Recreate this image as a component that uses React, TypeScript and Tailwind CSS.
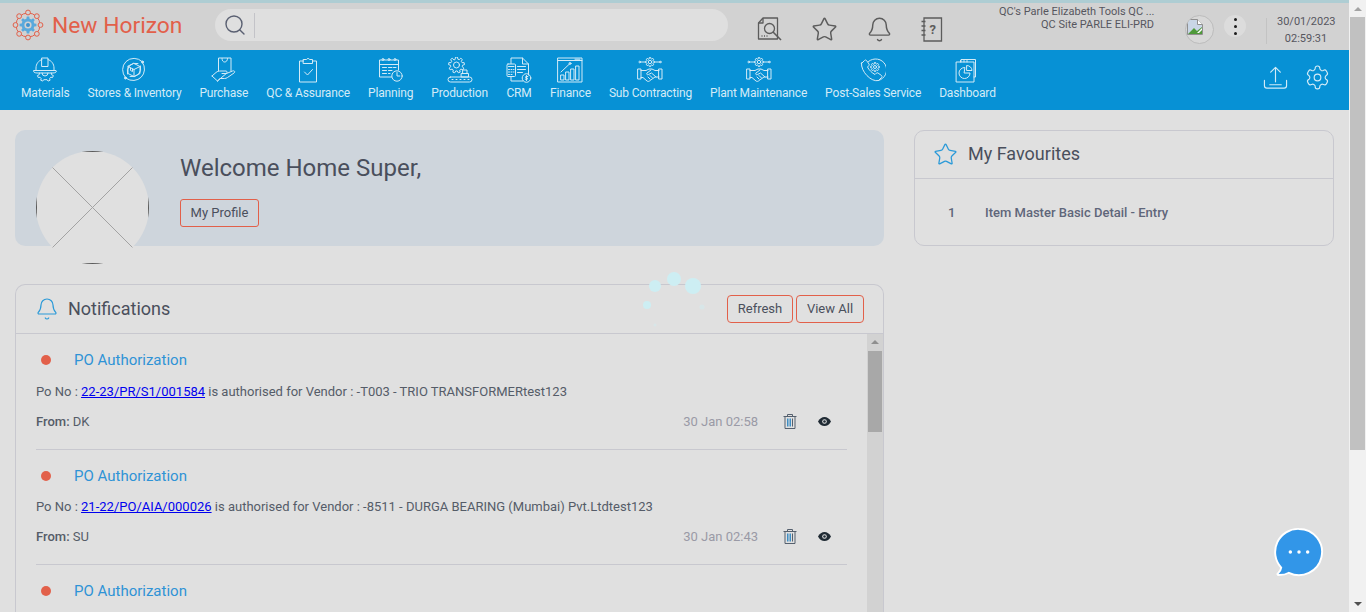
import { Bell, Search, Star } from 'lucide-react';

type IconProps = { className?: string };

const line = {
  fill: 'none',
  stroke: 'currentColor',
  strokeWidth: 1,
  strokeLinecap: 'round' as const,
  strokeLinejoin: 'round' as const,
};

// toothed outline, used by every small gear in the logo and nav icons
function gearPath(cx: number, cy: number, outer: number, inner: number, teeth: number) {
  const step = (Math.PI * 2) / teeth;
  const pts: string[] = [];
  for (let i = 0; i < teeth; i++) {
    const a = i * step - Math.PI / 2;
    const corners: [number, number][] = [
      [inner, a - step * 0.32],
      [outer, a - step * 0.18],
      [outer, a + step * 0.18],
      [inner, a + step * 0.32],
    ];
    corners.forEach(([r, t]) => {
      pts.push(`${(cx + r * Math.cos(t)).toFixed(2)} ${(cy + r * Math.sin(t)).toFixed(2)}`);
    });
  }
  return `M${pts.join('L')}Z`;
}

function MaterialsIcon() {
  return (
    <svg width="26" height="26" viewBox="0 0 26 26" {...line}>
      <path d="M2 13.500h22c.5 0 .6 1 .2 1.400-.8.8-2 1.100-3.200 1.100H5c-1.200 0-2.400-.3-3.200-1.100-.4-.4-.3-1.400.2-1.400z" />
      <path d="M4 13.500v-2.500c0-4 2.500-7.500 6-8.500M22 13.500v-2.500c0-4-2.500-7.500-6-8.500" />
      <path d="M10 1h6v8.500h-6z" />
      <path d="M7.500 16l-.4 1.800-1.700.8.9 2 1.700-.4 1.200 1.400-.5 1.600 2 .9 1-1.400h3.400l1 1.400 2-.9-.5-1.600 1.200-1.400 1.700.4.9-2-1.700-.8-.4-1.800" />
      <path d="M10 16a3 3 0 0 0 6 0" />
    </svg>
  );
}

function StoresIcon() {
  return (
    <svg width="26" height="26" viewBox="0 0 26 26" {...line}>
      <path d="M4.500 20.500A11.500 11.500 0 0 1 21 4.500M21.500 5.500A11.500 11.500 0 0 1 5.500 21.500" />
      <path d="M6.500 17A8.500 8.500 0 0 1 17 6.500M19.500 9A8.500 8.500 0 0 1 9 19.500" />
      <path d="M13 6.500l6 3v7l-6 3-6-3v-7z" />
      <path d="M7 9.500l6 3 6-3M13 12.500v7M9.500 11l0 2.500 2 1v-2.500" />
      <circle cx="21.500" cy="5" r="1" fill="currentColor" />
      <circle cx="4.500" cy="21" r="1" fill="currentColor" />
    </svg>
  );
}

function PurchaseIcon() {
  return (
    <svg width="26" height="26" viewBox="0 0 26 26" {...line}>
      <path d="M7.500 14V1h12.500v13" />
      <path d="M11 1.500c0 2 1 3.500 2.700 3.500s2.800-1.500 2.800-3.500" />
      <path d="M1 19l4-3.500c1.500-1.300 3-1.500 5-1.500h5c1.500 0 1.500 2.500 0 2.500h-4" />
      <path d="M15.500 16.500l6-2.500c2-.8 3 1 1.500 2l-6.500 4.500c-1 .7-2 1-3 1H9l-2.500 2.500z" />
      <path d="M1 19l5.500 5" />
    </svg>
  );
}

function QcIcon() {
  return (
    <svg width="26" height="26" viewBox="0 0 26 26" {...line}>
      <path d="M8.500 4H4.500v21h17V4h-4" />
      <path d="M8.500 2.500h3c.3-1.300 3-1.300 3 0h3v4h-9z" />
      <path d="M9.500 15l3 3 5-5.500" />
    </svg>
  );
}

function PlanningIcon() {
  return (
    <svg width="26" height="26" viewBox="0 0 26 26" {...line}>
      <path d="M13.500 20H1.500V3h19v10" />
      <path d="M1.500 7.500h19" />
      <circle cx="5" cy="2.500" r="1" />
      <circle cx="11" cy="2.500" r="1" />
      <circle cx="17" cy="2.500" r="1" />
      <path d="M4.500 10.500h4M10.500 10.500h3.500M15.500 10.500h2.500M4.500 13.500h4M10.500 13.500h3.500M4.500 16.500h4M10.500 16.500h1.500" />
      <circle cx="19" cy="19" r="5.200" />
      <path d="M19 15.500V19h2.800" />
    </svg>
  );
}

function ProductionIcon() {
  return (
    <svg width="26" height="26" viewBox="0 0 26 26" {...line}>
      <path d={gearPath(9.500, 8, 8, 6, 9)} />
      <circle cx="9.500" cy="8" r="3" />
      <rect x="1" y="20" width="24" height="5" rx="2.500" />
      <path d="M5 22.500h1M9 22.500h1M13 22.500h1M17 22.500h1M21 22.500h1" />
      <rect x="14.500" y="16.500" width="7" height="3.500" />
      <rect x="16" y="13" width="4" height="3.500" />
    </svg>
  );
}

function CrmIcon() {
  return (
    <svg width="26" height="26" viewBox="0 0 26 26" {...line}>
      <path d="M5 6.500V1h11.500l6 6v11" />
      <path d="M16.500 1v6h6" />
      <path d="M5 19.500V24h12" />
      <rect x="1" y="7" width="8.500" height="12.500" rx="1" />
      <path d="M2.500 9.500h5.500M2.500 12.500h1M5 12.500h1M7.500 12.500h.5M2.500 15h1M5 15h1M7.500 15h.5M2.500 17.500h1M5 17.500h1" />
      <path d="M11.500 9.500h8M11.500 12.500h8M11.500 15.500h5" />
      <circle cx="20.500" cy="21" r="4.300" />
      <path d="M20.500 18.500v5M21.800 19.500h-2v1.500h1.500v1.200h-2" />
    </svg>
  );
}

function FinanceIcon() {
  return (
    <svg width="26" height="26" viewBox="0 0 26 26" {...line}>
      <rect x="1" y="1" width="24" height="24" />
      <path d="M1 3.500h24M18 2.200h5" />
      <rect x="4" y="18" width="3" height="5" />
      <rect x="9" y="15" width="3" height="8" />
      <rect x="14" y="12" width="3" height="11" />
      <rect x="19" y="9" width="3" height="14" />
      <path d="M4 15l9-8.500" />
      <circle cx="13" cy="6.500" r="1" />
    </svg>
  );
}

function HandshakeIcon() {
  return (
    <svg width="26" height="26" viewBox="0 0 26 26" {...line}>
      <path d={gearPath(13, 5, 4.600, 3.400, 8)} />
      <circle cx="13" cy="5" r="1.700" />
      <path d="M8.500 5H3.500M17.500 5H22.500" />
      <circle cx="2.700" cy="5" r=".8" />
      <circle cx="23.300" cy="5" r=".8" />
      <path d="M1 12h3v10H1zM22 12h3v10h-3z" />
      <path d="M4 13.500h5l3-1.500h3l3 1.500h4M4 20.500h2l4 3.500c1 .8 2.500.3 3-.5l5-3.500h4" />
      <path d="M14 13l-4 3c-1 1 .3 2.300 1.500 1.500l3-1.500 4.500 4" />
      <path d="M11 20l2 2M13 18.500l2.500 2.500" />
    </svg>
  );
}

function ServiceIcon() {
  return (
    <svg width="26" height="26" viewBox="0 0 26 26" {...line}>
      <path d="M8.500 4.500a11 11 0 1 1 10 19" />
      <path d="M1.500 6.500L4.500 3.500c.7-.7 1.500-.7 2 0l2.500 3.500c.4.6.3 1.200-.2 1.700l-1.300 1.300c1.500 3 4.500 6 7.500 7.500l1.300-1.300c.5-.5 1.100-.6 1.700-.2l3.500 2.500c.7.5.7 1.300 0 2l-3 3c-7 2-18-9-17-17.500z" />
      <path d={gearPath(15, 10, 4.500, 3.300, 8)} />
      <circle cx="15" cy="10" r="1.500" />
    </svg>
  );
}

function DashboardIcon() {
  return (
    <svg width="26" height="26" viewBox="0 0 26 26" {...line}>
      <path d="M7 5V2.500h14.500V20H20" />
      <rect x="2.500" y="5" width="17.500" height="20" />
      <path d="M6.500 5V3.500M10 5V3.500M13 5V3.500" />
      <path d="M10.500 10.500a5.500 5.500 0 1 0 5.500 5.500h-5.500z" />
      <path d="M13 8.500a5 5 0 0 1 5 5h-5z" />
    </svg>
  );
}

function GearOutline({ className }: IconProps) {
  return (
    <svg className={className} viewBox="0 0 24 24" fill="none" stroke="currentColor" strokeWidth="1.100" strokeLinejoin="round">
      <path d="M12.200 1h-.4a2 2 0 0 0-2 2v.2a2 2 0 0 1-1 1.700l-.4.300a2 2 0 0 1-2 0l-.2-.1a2 2 0 0 0-2.700.7l-.8 1.400a2 2 0 0 0 .7 2.700l.2.100a2 2 0 0 1 1 1.700v.5a2 2 0 0 1-1 1.700l-.2.100a2 2 0 0 0-.7 2.700l.8 1.400a2 2 0 0 0 2.700.7l.2-.1a2 2 0 0 1 2 0l.4.300a2 2 0 0 1 1 1.700v.2a2 2 0 0 0 2 2h.4a2 2 0 0 0 2-2v-.2a2 2 0 0 1 1-1.700l.4-.3a2 2 0 0 1 2 0l.2.100a2 2 0 0 0 2.700-.7l.8-1.400a2 2 0 0 0-.7-2.700l-.2-.1a2 2 0 0 1-1-1.700v-.5a2 2 0 0 1 1-1.700l.2-.1a2 2 0 0 0 .7-2.700l-.8-1.400a2 2 0 0 0-2.700-.7l-.2.100a2 2 0 0 1-2 0l-.4-.3a2 2 0 0 1-1-1.700V3a2 2 0 0 0-2-2z" />
      <circle cx="12" cy="12" r="3.200" />
    </svg>
  );
}

function UploadTray({ className }: IconProps) {
  return (
    <svg className={className} viewBox="0 0 26 24" fill="none" stroke="currentColor" strokeWidth="1.200" strokeLinecap="round" strokeLinejoin="round">
      <path d="M13 16.500V2M8 6.500L13 1.500l5 5" />
      <path d="M1.500 15v5.500c0 1.500 1 2.500 2.500 2.500h18c1.500 0 2.500-1 2.500-2.500V15" />
      <path d="M7 19.500h12" />
    </svg>
  );
}

function LogoMark() {
  const nodes = [0, 45, 90, 135, 180, 225, 270, 315];
  return (
    <svg width="32" height="32" viewBox="0 0 32 32" fill="none" className="-ml-px">
      <circle cx="16" cy="16" r="12" stroke="#e2604a" strokeWidth="1" />
      {nodes.map((deg) => (
        <circle
          key={deg}
          cx={16 + 12.500 * Math.cos((deg * Math.PI) / 180)}
          cy={16 + 12.500 * Math.sin((deg * Math.PI) / 180)}
          r="2.400"
          fill="#d2d2d2"
          stroke="#e2604a"
          strokeWidth="1"
        />
      ))}
      <path d={gearPath(16, 16, 8.500, 6.500, 8)} fill="#5aa9dc" />
      <circle cx="16" cy="16" r="3.600" fill="#d2d2d2" />
      <circle cx="16" cy="16" r="2" fill="#3f93cf" />
    </svg>
  );
}

function DocSearch() {
  return (
    <svg width="26" height="26" viewBox="0 0 26 26" fill="none" stroke="#5c5c5c" strokeWidth="1.300" strokeLinejoin="round">
      <path d="M6 1h14.500v21H1.500V6z" />
      <path d="M6 1v5H1.500" />
      <circle cx="12.500" cy="11.500" r="5" />
      <path d="M16 15l8 8" strokeWidth="1.600" />
      <path d="M4.500 19h1M7 19h1M9.500 19h1" />
    </svg>
  );
}

function HelpBook() {
  return (
    <svg width="22" height="25" viewBox="0 0 22 25" fill="none" stroke="#5c5c5c" strokeWidth="1.300">
      <path d="M3 1h17.500v23H3z" />
      <path d="M0.500 4.500h4M0.500 9h4M0.500 13.500h4M0.500 18h4" />
      <text x="8.500" y="17" fontSize="13" fontWeight="700" fill="#5c5c5c" stroke="none" fontFamily="Roboto, sans-serif">?</text>
    </svg>
  );
}

function BrokenImage() {
  return (
    <svg width="16" height="16" viewBox="0 0 16 16">
      <path d="M0.500 0.500h10l5 5v10H0.500z" fill="#c9d6e6" stroke="#8f8f8f" />
      <path d="M10.500 0.500v5h5" fill="#fff" stroke="#8f8f8f" />
      <path d="M1 15l6-6 3 3 5-4v7z" fill="#4f9a3a" />
      <path d="M10 14l5-5v2l-3 3z" fill="#fff" />
    </svg>
  );
}

function AvatarPlaceholder() {
  return (
    <svg width="113" height="113" viewBox="0 0 113 113" className="rounded-full bg-[#e0e0e0]">
      <path d="M0 0L113 113M113 0L0 113" stroke="#a3a3a3" strokeWidth="1" />
      <rect x="0.500" y="0.500" width="112" height="112" fill="none" stroke="#5b5b5b" strokeWidth="1" />
    </svg>
  );
}

function TrashIcon() {
  return (
    <svg width="14" height="15" viewBox="0 0 14 15" fill="none" stroke="#55606e" strokeWidth="1">
      <path d="M0.500 2.500h13M4.500 2.500V0.500h5v2" />
      <path d="M2 2.500v12h10v-12" />
      <path d="M4.500 4.500v8M6 4.500v8M7.500 4.500v8" stroke="#3f8fc5" />
      <path d="M9.500 4.500v8" />
    </svg>
  );
}

function EyeIcon() {
  return (
    <svg width="13" height="9" viewBox="0 0 13 9">
      <path d="M0 4.500C1.500 1.500 4 0 6.500 0S11.500 1.500 13 4.500C11.500 7.500 9 9 6.500 9S1.500 7.500 0 4.500z" fill="#1f2a33" />
      <circle cx="6.500" cy="4.500" r="2.300" fill="#e0e0e0" />
      <circle cx="6.500" cy="4.500" r="1.300" fill="#1f2a33" />
    </svg>
  );
}

const navItems = [
  { label: 'Materials', icon: <MaterialsIcon /> },
  { label: 'Stores & Inventory', icon: <StoresIcon /> },
  { label: 'Purchase', icon: <PurchaseIcon /> },
  { label: 'QC & Assurance', icon: <QcIcon /> },
  { label: 'Planning', icon: <PlanningIcon /> },
  { label: 'Production', icon: <ProductionIcon /> },
  { label: 'CRM', icon: <CrmIcon /> },
  { label: 'Finance', icon: <FinanceIcon /> },
  { label: 'Sub Contracting', icon: <HandshakeIcon /> },
  { label: 'Plant Maintenance', icon: <HandshakeIcon /> },
  { label: 'Post-Sales Service', icon: <ServiceIcon /> },
  { label: 'Dashboard', icon: <DashboardIcon /> },
];

function Header() {
  return (
    <header className="flex h-[47px] items-center bg-[#d2d2d2] pb-[3px] pl-[13px]">
      <LogoMark />
      <span className="ml-[8px] mt-[2px] w-[163px] text-[22.800px] leading-none text-[#e2604a]">New Horizon</span>
      <div className="flex h-[32px] w-[513px] items-center rounded-full bg-[#dfdfdf] pl-[8px]">
        <Search className="size-[24px] text-[#5a6072]" strokeWidth={1.4} />
        <div className="ml-[7px] h-[25px] w-px bg-[#c3c3c8]" />
      </div>
      <div className="mt-[9px] ml-[29px] flex items-center gap-[28px]">
        <DocSearch />
        <Star className="size-[27px] text-[#5c5c5c]" strokeWidth={1.3} />
        <Bell className="size-[27px] text-[#5c5c5c]" strokeWidth={1.3} />
        <HelpBook />
      </div>
      <div className="mb-[15px] ml-[56px] w-[155px] text-right text-[11px] leading-[13px] text-[#56565e]">
        <div className="whitespace-nowrap">QC's Parle Elizabeth Tools QC ...</div>
        <div>QC Site PARLE ELI-PRD</div>
      </div>
      <div className="ml-[31px] mt-[9px] flex size-[29px] overflow-hidden rounded-full border border-[#bcbcbc] bg-[#d8d8d8] pl-[1px] pt-[3px]">
        <div className="shrink-0">
          <BrokenImage />
        </div>
      </div>
      <div className="ml-[10px] mt-[2px] flex size-[22px] flex-col items-center justify-center gap-[4px] rounded-full bg-[#dcdcdc]">
        <i className="size-[3px] rounded-full bg-[#1c1c1c]" />
        <i className="size-[3px] rounded-full bg-[#1c1c1c]" />
        <i className="size-[3px] rounded-full bg-[#1c1c1c]" />
      </div>
      <div className="ml-[20px] mt-[12px] h-[26px] w-px bg-[#c3c3c3]" />
      <div className="ml-[10px] mt-[9px] w-[58px] text-center text-[11px] leading-[17px] text-[#56565e]">
        <div>30/01/2023</div>
        <div>02:59:31</div>
      </div>
    </header>
  );
}

function NavBar() {
  return (
    <nav className="flex h-[60px] items-start bg-[#0791d5] pl-[21px] text-[#d4ebf7]">
      <div className="flex gap-[18px]">
        {navItems.map((item) => (
          <div key={item.label} className="flex flex-col items-center pt-[7px]">
            <div className="h-[26px]">{item.icon}</div>
            <span className="mt-[1px] whitespace-nowrap text-[12px] leading-[18px] tracking-[-0.16px]">{item.label}</span>
          </div>
        ))}
      </div>
      <div className="ml-auto mr-[19px] mt-[15px] flex items-center gap-[17px]">
        <UploadTray className="size-[25px]" />
        <GearOutline className="size-[25px]" />
      </div>
    </nav>
  );
}

function Hero() {
  return (
    <section className="relative h-[116px] rounded-[10px] bg-[#ced5dc] pl-[165px] pt-[22px]">
      <div className="absolute left-[21px] top-[21px]">
        <AvatarPlaceholder />
      </div>
      <h1 className="text-[24px] leading-[32px] text-[#4a4f5c]">Welcome Home Super,</h1>
      <button className="mt-[15px] h-[28px] w-[79px] rounded-[3px] border border-[#e2604a] text-[13px] text-[#4a4f5c]">My Profile</button>
    </section>
  );
}

type NoticeProps = {
  poNo: string;
  vendor: string;
  from: string;
  time: string;
  textGap: string;
  fromGap: string;
  bottom: string;
};

const notices: NoticeProps[] = [
  {
    poNo: '22-23/PR/S1/001584',
    vendor: ' is authorised for Vendor : -T003 - TRIO TRANSFORMERtest123',
    from: 'DK',
    time: '30 Jan 02:58',
    textGap: 'mt-[12px]',
    fromGap: 'mt-[10px]',
    bottom: 'pb-[17px]',
  },
  {
    poNo: '21-22/PO/AIA/000026',
    vendor: ' is authorised for Vendor : -8511 - DURGA BEARING (Mumbai) Pvt.Ltdtest123',
    from: 'SU',
    time: '30 Jan 02:43',
    textGap: 'mt-[11px]',
    fromGap: 'mt-[10px]',
    bottom: 'pb-[17px]',
  },
];

function NoticeTitle() {
  return (
    <div className="flex h-[20px] items-center">
      <i className="ml-[5px] size-[10px] rounded-full bg-[#e2604a]" />
      <span className="ml-[23px] text-[15px] leading-[20px] text-[#2f93d6]">PO Authorization</span>
    </div>
  );
}

function Notice({ poNo, vendor, from, time, textGap, fromGap, bottom }: NoticeProps) {
  return (
    <div className={`border-b border-[#c8c8cf] pt-[16px] ${bottom}`}>
      <NoticeTitle />
      <p className={`${textGap} -ml-px text-[13px] leading-[20px] text-[#555c68]`}>
        <span className="ml-px">Po No :</span> <a className="text-[#0000ee] underline">{poNo}</a>
        {vendor}
      </p>
      <div className={`${fromGap} flex h-[20px] items-center text-[13px] text-[#555c68]`}>
        <span>
          <b className="font-medium">From:</b> {from}
        </span>
        <span className="ml-auto text-[#9a9aa6]">{time}</span>
        <span className="mb-[2px] ml-[25px] mr-[17px] flex w-[14px] justify-center"><TrashIcon /></span>
        <span className="mb-[2px] mr-[16px] ml-[4px] flex w-[13px] justify-center"><EyeIcon /></span>
      </div>
    </div>
  );
}

function Notifications() {
  return (
    <section className="mt-[38px] flex h-[328px] flex-col rounded-t-[10px] border border-b-0 border-[#c8c8cf]">
      <div className="flex h-[49px] shrink-0 items-center border-b border-[#c8c8cf] pl-[19px] pr-[19px]">
        <Bell className="size-[24px] text-[#2b9ad8]" strokeWidth={1.2} />
        <h2 className="mb-[2px] ml-[9px] text-[18px] text-[#4a4f5c]">Notifications</h2>
        <button className="ml-auto h-[28px] w-[66px] rounded-[4px] border border-[#e2604a] text-[13px] text-[#4a4f5c]">Refresh</button>
        <button className="ml-[3px] h-[28px] w-[68px] rounded-[4px] border border-[#e2604a] text-[13px] text-[#4a4f5c]">View All</button>
      </div>
      <div className="flex min-h-0 flex-1">
        <div className="min-w-0 flex-1 overflow-hidden pl-[20px] pr-[20px]">
          {notices.map((n) => (
            <Notice key={n.poNo} {...n} />
          ))}
          <div className="pt-[16px]">
            <NoticeTitle />
          </div>
        </div>
        <div className="flex w-[16px] shrink-0 flex-col items-center bg-[#d2d2d2] px-px">
          <i className="mt-[6px] h-0 w-0 border-x-[4px] border-b-[4px] border-x-transparent border-b-[#8f8f8f]" />
          <div className="mt-[7px] h-[81px] w-full bg-[#a8a8a8]" />
        </div>
      </div>
    </section>
  );
}

function Favourites() {
  return (
    <section className="h-[116px] rounded-[10px] border border-[#c8c8cf]">
      <div className="flex h-[48px] items-center border-b border-[#c8c8cf] pl-[18px]">
        <Star className="size-[25px] text-[#2b9ad8]" strokeWidth={1.2} />
        <h2 className="mb-[2px] ml-[10px] text-[18px] text-[#4a4f5c]">My Favourites</h2>
      </div>
      <div className="mt-[24px] flex text-[13px] font-medium leading-[20px] text-[#5f667a]">
        <span className="ml-[33px] w-[37px]">1</span>
        <span>Item Master Basic Detail - Entry</span>
      </div>
    </section>
  );
}

function Spinner() {
  return (
    <svg className="absolute left-[640px] top-[270px]" width="70" height="62" viewBox="0 0 70 62">
      <circle cx="15" cy="16" r="6" fill="#cdeef3" />
      <circle cx="34" cy="9" r="7" fill="#cdeef3" />
      <circle cx="53" cy="16" r="8" fill="#cdeef3" />
      <circle cx="7" cy="35" r="4" fill="#cdeef3" />
      <circle cx="62" cy="37" r="2.500" fill="#d8e6e8" />
      <circle cx="15" cy="55" r="1.500" fill="#d8e6e8" />
    </svg>
  );
}

function ChatBubble() {
  return (
    <svg className="absolute left-[1274px] top-[527px]" width="50" height="50" viewBox="0 0 52 52">
      <path d="M26 2a24 24 0 1 1-10.500 45.600c-3 1.800-6.500 2.400-10.500 2.400-1.500 0-1.800-1.200-.8-2 1.800-1.500 3-3.500 3.300-5.800A24 24 0 0 1 26 2z" fill="#3296e8" stroke="#fff" strokeWidth="2" />
      <circle cx="17" cy="26" r="1.800" fill="#fff" />
      <circle cx="26" cy="26" r="1.800" fill="#fff" />
      <circle cx="35" cy="26" r="1.800" fill="#fff" />
    </svg>
  );
}

function PageScrollbar() {
  return (
    <aside className="flex h-full w-[17px] shrink-0 flex-col items-center bg-[#f1f1f1]">
      <i className="mt-[7px] h-0 w-0 border-x-[4px] border-b-[4px] border-x-transparent border-b-[#a3a3a3]" />
      <div className="mt-[6px] h-[433px] w-[15px] bg-[#c1c1c1]" />
      <i className="mt-auto mb-[6px] h-0 w-0 border-x-[4px] border-t-[4px] border-x-transparent border-t-[#505050]" />
    </aside>
  );
}

export default function App() {
  return (
    <div className="relative flex h-[612px] w-[1366px] overflow-hidden bg-[#e0e0e0] font-['Roboto',sans-serif]">
      <div className="min-w-0 flex-1">
        <div className="h-[3px] bg-[#aecdd3]" />
        <Header />
        <NavBar />
        <main className="flex gap-[30px] pl-[15px] pr-[15px] pt-[20px]">
          <div className="w-[869px] shrink-0">
            <Hero />
            <Notifications />
          </div>
          <div className="w-[420px] shrink-0">
            <Favourites />
          </div>
        </main>
      </div>
      <PageScrollbar />
      <Spinner />
      <ChatBubble />
    </div>
  );
}
